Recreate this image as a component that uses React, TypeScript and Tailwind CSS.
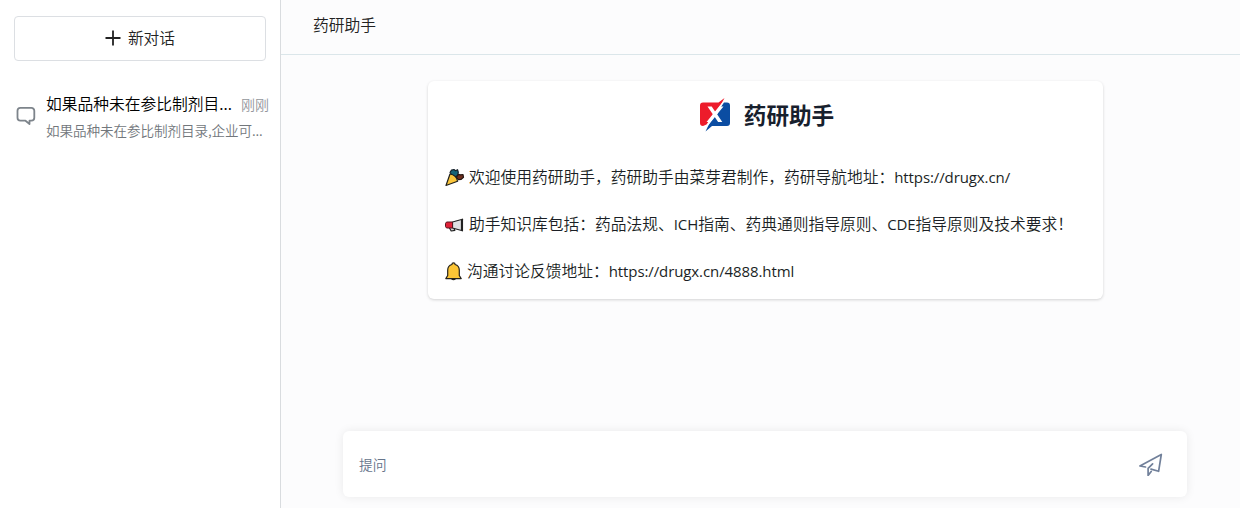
import React from 'react';

const Latin: React.FC<{ children: string }> = ({ children }) => (
  <span className="font-['Open_Sans','Noto_Sans',sans-serif] text-[15px] font-normal tracking-[-0.1px]">{children}</span>
);

const PlusIcon = () => (
  <svg width="16" height="16" viewBox="0 0 16 16" fill="none" stroke="#222" strokeWidth="1.8">
    <path d="M8 0.5v15M0.5 8h15" />
  </svg>
);

const ChatIcon = () => (
  <svg width="20" height="20" viewBox="0 0 20 20" fill="none" stroke="#7d848b" strokeWidth="1.8" strokeLinecap="round" strokeLinejoin="round">
    <path d="M4.4 1.9h11a2.9 2.9 0 0 1 2.9 2.9v7a2.9 2.9 0 0 1-2.9 2.9h-1.9v3.300l-4-3.300H4.400a2.900 2.900 0 0 1-2.900-2.900v-7a2.900 2.900 0 0 1 2.900-2.900Z" />
  </svg>
);

const Logo = () => (
  <svg width="32" height="36" viewBox="0 0 32 36">
    <path d="M4 5.500h15.500L25.500 1l-4.200 8L7.500 27.500 4 29a3 3 0 0 1-3-3V8.500a3 3 0 0 1 3-3Z" fill="#ed1c2b" />
    <path d="M25 5.500h3a3 3 0 0 1 3 3V26a3 3 0 0 1-3 3H13l-6.500 5.500L10 27Z" fill="#0b4da2" />
    <path d="M25.500 2.500 18.300 17 6.300 32l4.500-9.500 3.700-6Z" fill="#fff" />
    <path d="M8.500 9.500h4.200l3.500 5.200 4.300-5.200h4l-6.400 7.700 5.200 7.800h-4.200l-3.500-5.200-4.300 5.200H7.500l6.300-7.800Z" fill="#fff" />
  </svg>
);

const PartyIcon = () => (
  <svg width="20" height="20" viewBox="0 0 20 20" strokeLinejoin="round" strokeLinecap="round">
    <path d="M6.500 6.500 5 4.500l1.500-2.300L9 1.500l1.500 1.200 2-1 .8 2.500-.6 3.300-2.700 1.500Z" fill="#176477" stroke="#16212a" strokeWidth="1.200" />
    <path d="m11.300 9.300 2.100-3 2 .5 2.600-.3.500 2.800-2.300 2.100-2.900.3Z" fill="#70301f" stroke="#251713" strokeWidth="1.200" />
    <path d="M5 6 1 17.500l11.600-4.200C12 9.800 9.200 6.800 5 6Z" fill="#fbc63b" stroke="#20201d" strokeWidth="1.200" />
  </svg>
);

const MegaphoneIcon = () => (
  <svg width="20" height="20" viewBox="0 0 20 20" strokeLinejoin="round">
    <path d="M4.200 12.500h4.200l1.500 2.800-3.700.7Z" fill="#d8d8d8" stroke="#222" strokeWidth="1.200" />
    <path d="M7.500 7 16.500 4.500v11L7.500 13Z" fill="#dfe0e2" stroke="#222" strokeWidth="1.200" />
    <path d="M1.500 7h6v6h-6l-1-1.500v-3Z" fill="#df2137" stroke="#571721" strokeWidth="1" />
    <path d="M17.300 4.200v11.600" stroke="#222" strokeWidth="1.500" strokeLinecap="round" />
  </svg>
);

const BellIcon = () => (
  <svg width="17" height="20" viewBox="0 0 17 20" stroke="#25221c" strokeWidth="1.200" strokeLinejoin="round">
    <path d="M6.400 15.500h4.200a2.100 2.100 0 0 1-4.200 0Z" fill="#e29b1d" />
    <path d="M2.700 13.500V8.200c0-2.900 1.700-5.100 4.200-5.700a1.600 1.600 0 0 1 3.200 0c2.500.6 4.200 2.800 4.200 5.700v5.300l1.900 3.100H.8Z" fill="#fcc536" />
  </svg>
);

const SendIcon = () => (
  <svg width="24" height="24" viewBox="0 0 24 24" fill="none" stroke="#71809a" strokeWidth="1.700" strokeLinejoin="round" strokeLinecap="round">
    <path d="M6.500 15 .900 14 22.300 2.500 19.600 19.300l-7.600-2.200" />
    <path d="M13.600 11.800 9.100 16.400v7l3.100-3.900" />
  </svg>
);

const Sidebar = () => (
  <aside className="w-[281px] shrink-0 border-r border-[#d9dcdf] bg-white pt-4">
    <button className="ml-[14px] flex h-[45px] w-[252px] items-center justify-center gap-[7px] rounded-[4px] border border-[#dcdfe3] pb-[2px] text-[#222]">
      <PlusIcon />
      <span>新对话</span>
    </button>
    <div className="mt-8 flex pl-4">
      <div className="mt-[13px] w-[30px]">
        <ChatIcon />
      </div>
      <div className="w-[223px]">
        <div className="flex h-[22px] items-center justify-between text-black">
          <span>如果品种未在参比制剂目...</span>
          <span className="text-[14px] text-[#93969b]">刚刚</span>
        </div>
        <p className="mt-1 h-[22px] text-[13.600px] leading-[22px] tracking-[-0.100px] text-[#72777c]">如果品种未在参比制剂目录,企业可...</p>
      </div>
    </div>
  </aside>
);

const WelcomeCard = () => (
  <section className="mx-auto mt-[26px] h-[218px] w-[675px] translate-x-[5px] rounded-md bg-white px-[17px] pt-4 shadow-[0_1px_3px_rgba(0,0,0,0.17)]">
    <div className="flex h-9 items-center justify-center gap-[13px] pl-[2px]">
      <Logo />
      <h1 className="text-[22.600px] font-bold text-[#17202d]">药研助手</h1>
    </div>
    <div className="mt-[21px] text-[#1b1f25]">
      <div className="flex h-[47px] items-center gap-1">
        <PartyIcon />
        <p className="pb-[2px]">欢迎使用药研助手，药研助手由菜芽君制作，药研导航地址：<Latin>https://drugx.cn/</Latin></p>
      </div>
      <div className="flex h-[47px] items-center gap-1">
        <MegaphoneIcon />
        <p className="pb-[2px]">助手知识库包括：药品法规、<Latin>ICH</Latin>指南、药典通则指导原则、<Latin>CDE</Latin>指导原则及技术要求！</p>
      </div>
      <div className="flex h-[47px] items-center gap-[5px]">
        <BellIcon />
        <p className="pb-[2px]">沟通讨论反馈地址：<Latin>https://drugx.cn/4888.html</Latin></p>
      </div>
    </div>
  </section>
);

export default function App() {
  return (
    <div className="flex h-[508px] w-[1240px] overflow-hidden whitespace-nowrap bg-[#fcfcfd] font-['Noto_Sans_CJK_SC',sans-serif] text-[15.750px] leading-6 font-[350]">
      <Sidebar />
      <main className="flex min-w-0 flex-1 flex-col">
        <header className="h-[55px] shrink-0 border-b border-[#dbe6ea] pt-[13px] pl-8 text-[#222]">药研助手</header>
        <WelcomeCard />
        <div className="mt-auto mb-[11px] ml-[62px] flex h-[66px] w-[844px] items-center justify-between rounded-md bg-white pr-6 pl-4 shadow-[0_0_10px_rgba(0,0,0,0.08)]">
          <span className="text-[13.800px] text-[#66758b]">提问</span>
          <SendIcon />
        </div>
      </main>
    </div>
  );
}
